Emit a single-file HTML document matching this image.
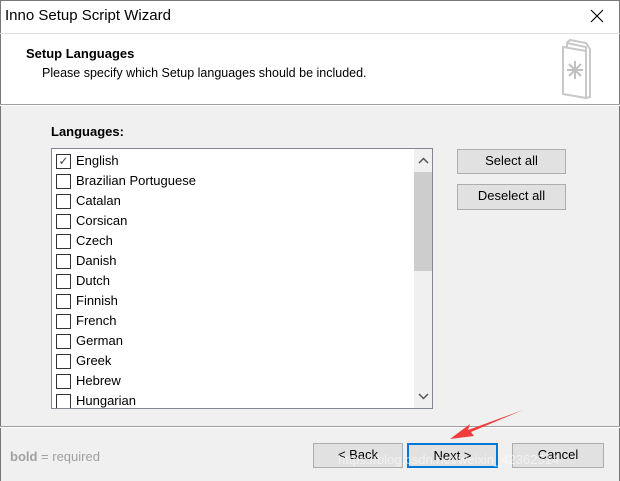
<!DOCTYPE html><html><head><style>
body{margin:0;width:620px;height:481px;overflow:hidden;font-family:"Liberation Sans",sans-serif;font-size:13px;background:#f0f0f0;position:relative}
.a{position:absolute}
.btn{position:absolute;background:#e1e1e1;border:1px solid #adadad;box-sizing:border-box;text-align:center;font-size:13px;line-height:22px;color:#000}
.row{position:absolute;left:4px;height:20px;line-height:20px}
.cb{position:absolute;left:0;top:3px;width:13px;height:13px;border:1px solid #333;background:#fff}
.row span{position:absolute;left:20px;white-space:nowrap}
</style></head><body>
<div class="a" style="left:0;top:0;width:620px;height:105px;background:#fff"></div>
<div class="a" style="left:0;top:0;width:1px;height:481px;background:#777"></div>
<div class="a" style="left:619px;top:0;width:1px;height:481px;background:#777"></div>
<div class="a" style="left:0;top:0;width:620px;height:1px;background:#777"></div>
<div class="a" style="left:5px;top:7px;font-size:15px">Inno Setup Script Wizard</div>
<svg class="a" style="left:590px;top:9px" width="14" height="14"><path d="M1 1 L13 13 M13 1 L1 13" stroke="#000" stroke-width="1.1"/></svg>
<div class="a" style="left:0;top:33px;width:620px;height:1px;background:#ddd"></div>
<div class="a" style="left:26px;top:46px;font-weight:bold;font-size:13px">Setup Languages</div>
<div class="a" style="left:42px;top:66px;font-size:12.5px">Please specify which Setup languages should be included.</div>
<svg class="a" style="left:558px;top:34px" width="40" height="68"><g fill="none" stroke="#c8c8c8" stroke-width="2"><path d="M5 13 L5 60 L28 64 L28 17 Z"/><path d="M9 13 L9 9 L28 13 L28 17"/><path d="M9 9 L12 6 L28 9 L32 15 L32 63 L28 64"/></g><g stroke="#c0c0c0" stroke-width="2"><path d="M17 27 L17 45 M9 36 L25 36 M11 30 L23 42 M23 30 L11 42"/></g></svg>
<div class="a" style="left:0;top:104px;width:620px;height:1px;background:#a0a0a0"></div>
<div class="a" style="left:0;top:105px;width:620px;height:1px;background:#fff"></div>
<div class="a" style="left:51px;top:124px;font-weight:bold">Languages:</div>
<div class="a" style="left:51px;top:148px;width:382px;height:261px;border:1px solid #828790;box-sizing:border-box;background:#fff;overflow:hidden">
<div class="a" style="left:362px;top:0;width:19px;height:260px;background:#f0f0f0"></div>
<div class="a" style="left:362px;top:23px;width:19px;height:99px;background:#cdcdcd"></div>
<svg class="a" style="left:366px;top:8px" width="11" height="8"><path d="M1 6 L5.5 1.5 L10 6" fill="none" stroke="#555" stroke-width="1.5"/></svg>
<svg class="a" style="left:366px;top:243px" width="11" height="8"><path d="M1 2 L5.5 6.5 L10 2" fill="none" stroke="#555" stroke-width="1.5"/></svg>
<div class="row" style="top:2px"><div class="cb" style="font-size:12px;line-height:12px;text-align:center;color:#444">✓</div><span>English</span></div>
<div class="row" style="top:22px"><div class="cb"></div><span>Brazilian Portuguese</span></div>
<div class="row" style="top:42px"><div class="cb"></div><span>Catalan</span></div>
<div class="row" style="top:62px"><div class="cb"></div><span>Corsican</span></div>
<div class="row" style="top:82px"><div class="cb"></div><span>Czech</span></div>
<div class="row" style="top:102px"><div class="cb"></div><span>Danish</span></div>
<div class="row" style="top:122px"><div class="cb"></div><span>Dutch</span></div>
<div class="row" style="top:142px"><div class="cb"></div><span>Finnish</span></div>
<div class="row" style="top:162px"><div class="cb"></div><span>French</span></div>
<div class="row" style="top:182px"><div class="cb"></div><span>German</span></div>
<div class="row" style="top:202px"><div class="cb"></div><span>Greek</span></div>
<div class="row" style="top:222px"><div class="cb"></div><span>Hebrew</span></div>
<div class="row" style="top:242px"><div class="cb"></div><span>Hungarian</span></div>
</div>
<div class="btn" style="left:457px;top:149px;width:109px;height:25px">Select all</div>
<div class="btn" style="left:457px;top:184px;width:109px;height:26px">Deselect all</div>
<div class="a" style="left:0;top:426px;width:620px;height:1px;background:#a0a0a0"></div>
<div class="a" style="left:0;top:427px;width:620px;height:1px;background:#fff"></div>
<div class="a" style="left:10px;top:449px;color:#a0a0a0"><b>bold</b> = required</div>
<div class="btn" style="left:313px;top:443px;width:90px;height:25px">&lt; Back</div>
<div class="btn" style="left:407px;top:443px;width:91px;height:25px;border:2px solid #0078d7;line-height:21px">Next &gt;</div>
<div class="btn" style="left:512px;top:443px;width:92px;height:25px">Cancel</div>
<div class="a" style="left:338px;top:452px;color:rgba(255,255,255,.55);font-size:13px">https://blog.csdn.net/weixin_42362514</div>
<svg class="a" style="left:440px;top:405px" width="90" height="40"><path d="M83 5 L28 25 L30 19 L10 34 L34 31 L31 27 Z" fill="#f03c3c"/></svg>
</body></html>
